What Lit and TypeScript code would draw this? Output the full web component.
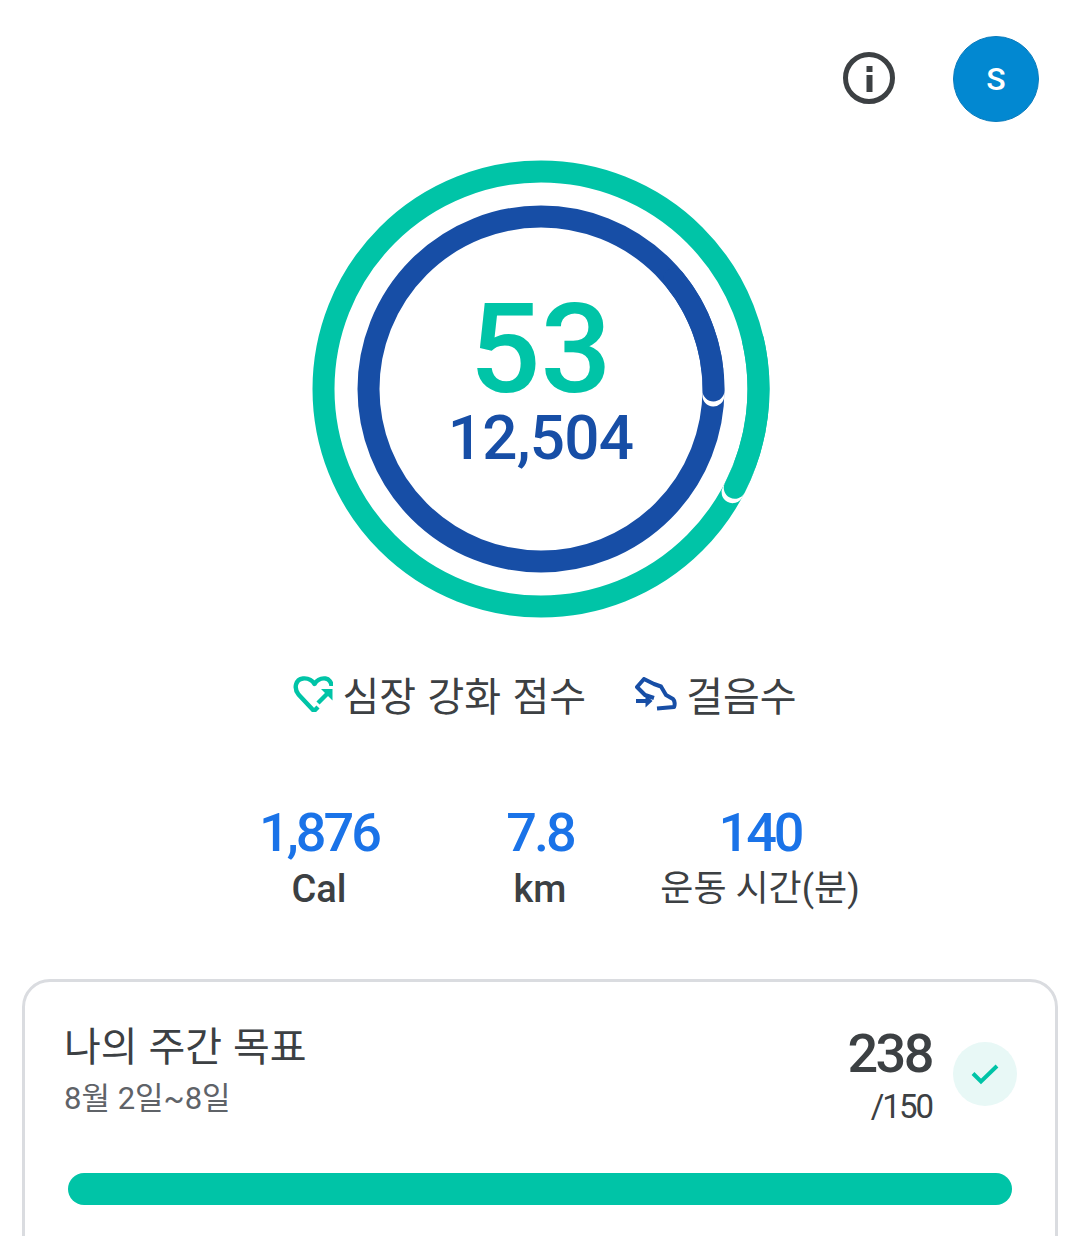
import { LitElement, html, css, svg } from 'lit';
import { customElement, property } from 'lit/decorators.js';

const TEAL = '#00c4a7';
const BLUE = '#174ea6';

// arc along a circle, angles in degrees clockwise from 12 o'clock
function arc(cx: number, cy: number, r: number, from: number, to: number) {
  const pt = (a: number) => {
    const t = ((a - 90) * Math.PI) / 180;
    return `${cx + r * Math.cos(t)} ${cy + r * Math.sin(t)}`;
  };
  const large = to - from > 180 ? 1 : 0;
  return `M ${pt(from)} A ${r} ${r} 0 ${large} 1 ${pt(to)}`;
}

@customElement('progress-rings')
export class ProgressRings extends LitElement {
  static styles = css`
    :host {
      display: block;
      position: relative;
      width: 460px;
      height: 460px;
    }
    svg {
      display: block;
    }
    .center {
      position: absolute;
      inset: 0;
      display: flex;
      flex-direction: column;
      align-items: center;
      font-family: 'Roboto', sans-serif;
      font-weight: 500;
    }
    .points {
      margin-top: 135px;
      font-size: 125px;
      line-height: 112px;
      color: #00c4a7;
    }
    .steps {
      margin-top: 1px;
      font-size: 62px;
      line-height: 62px;
      letter-spacing: -0.8px;
      color: #174ea6;
    }
  `;

  @property({ type: Number }) outerEnd = 117;
  @property({ type: Number }) innerEnd = 90.5;

  ring(r: number, end: number, color: string) {
    const c = 230;
    // white sliver just past the round cap, where the arc laps over itself
    const sliver = (5 / r) * (180 / Math.PI);
    return svg`
      <circle cx=${c} cy=${c} r=${r} fill="none" stroke=${color} stroke-width="22"></circle>
      <path d=${arc(c, c, r, end - 6, end + sliver)} fill="none" stroke="#fff" stroke-width="22" stroke-linecap="round"></path>
      <path d=${arc(c, c, r, end - 40, end)} fill="none" stroke=${color} stroke-width="22" stroke-linecap="round"></path>
    `;
  }

  render() {
    return html`
      <svg width="460" height="460" viewBox="0 0 460 460">
        ${this.ring(217.5, this.outerEnd, TEAL)} ${this.ring(172.5, this.innerEnd, BLUE)}
      </svg>
      <div class="center">
        <div class="points">53</div>
        <div class="steps">12,504</div>
      </div>
    `;
  }
}

@customElement('app-root')
export class AppRoot extends LitElement {
  static styles = css`
    :host {
      display: block;
      width: 1080px;
      height: 1236px;
      overflow: hidden;
      background: #fff;
      color: #3c4043;
      font-family: 'Roboto', 'Noto Sans CJK KR', sans-serif;
    }
    .top {
      display: flex;
      justify-content: flex-end;
      align-items: center;
      gap: 57px;
      padding: 36px 41px 0 0;
    }
    .info {
      display: block;
      margin-bottom: 2px;
    }
    .avatar {
      width: 86px;
      height: 86px;
      box-sizing: border-box;
      border-radius: 50%;
      background: #0288d1;
      border: 1px solid #0b7cbd;
      color: #fff;
      display: flex;
      align-items: center;
      justify-content: center;
      font-size: 32px;
      font-weight: 500;
    }
    .rings {
      display: flex;
      justify-content: center;
      margin-top: 37px;
      padding-left: 1px;
    }
    .legend {
      display: flex;
      justify-content: center;
      margin-top: 45px;
      height: 60px;
      align-items: center;
      font-size: 40px;
      word-spacing: 1.5px;
      padding-left: 9px;
      gap: 49px;
    }
    .legend-item {
      display: flex;
      align-items: center;
      gap: 9px;
      white-space: nowrap;
    }
    .stats {
      display: grid;
      grid-template-columns: 222px 220px 220px;
      padding-left: 208px;
      margin-top: 78px;
      text-align: center;
    }
    .stat-value {
      font-size: 54px;
      line-height: 62px;
      font-weight: 500;
      letter-spacing: -3px;
      color: #1a73e8;
    }
    .stat-label {
      font-size: 36px;
      line-height: 50px;
      white-space: nowrap;
    }
    .stat-label.strong {
      font-size: 38px;
      font-weight: 500;
    }
    .card {
      margin: 65px 22px 0;
      height: 300px;
      box-sizing: border-box;
      border: 3px solid #dadce0;
      border-radius: 28px;
      padding: 38px 43px 0 39px;
    }
    .card-head {
      display: flex;
      align-items: flex-start;
    }
    .titles {
      flex: 1;
    }
    .title {
      font-size: 40px;
      word-spacing: 1px;
      line-height: 56px;
    }
    .date {
      font-size: 31px;
      line-height: 46px;
      color: #5f6368;
    }
    .score {
      text-align: right;
      margin: 3px 21px 0 0;
    }
    .score-value {
      font-size: 54px;
      line-height: 62px;
      font-weight: 500;
      letter-spacing: -2.5px;
    }
    .score-goal {
      font-size: 33px;
      line-height: 44px;
      letter-spacing: -2px;
    }
    .check {
      width: 64px;
      height: 64px;
      border-radius: 50%;
      background: #e8f8f6;
      display: flex;
      align-items: center;
      justify-content: center;
      margin: 22px -5px 0 0;
    }
    .bar {
      height: 32px;
      border-radius: 16px;
      background: #00c4a7;
      margin: 44px 0 0 4px;
    }
  `;

  render() {
    return html`
      <div class="top">
        <svg class="info" width="54" height="54" viewBox="0 0 54 54">
          <circle cx="27" cy="27" r="23.5" fill="none" stroke="#3c4043" stroke-width="5"></circle>
          <rect x="24.5" y="15" width="6" height="6" fill="#3c4043"></rect>
          <rect x="24.5" y="24" width="6" height="17" fill="#3c4043"></rect>
        </svg>
        <div class="avatar">S</div>
      </div>

      <div class="rings"><progress-rings></progress-rings></div>

      <div class="legend">
        <div class="legend-item">
          <svg width="41" height="36" viewBox="0 0 41 36" fill="none">
            <path d="M26 31 L22 35 L6.5 18.5 C1.5 12 3.5 3.5 11 2.5 C16 2 20 4 22.5 8 C25 4 29 2 33.5 2.5 C37 3 39.5 6.5 39.5 10"
              stroke="#00c4a7" stroke-width="4.4" stroke-linejoin="round"></path>
            <path d="M36 17 L26 27" stroke="#00c4a7" stroke-width="4.4"></path>
            <path d="M29 13 H40.5 V24.5 Z" fill="#00c4a7"></path>
          </svg>
          심장 강화 점수
        </div>
        <div class="legend-item">
          <svg width="42" height="34" viewBox="0 0 42 34" fill="none">
            <path d="M19 21 L10 18 L2 10 L9 2 L19 7 L26 9.5 L31 18 L38 22 C40 24 40 28 39 30 L22 31.5"
              stroke="#174ea6" stroke-width="4" stroke-linejoin="round"></path>
            <path d="M1 24 H13" stroke="#174ea6" stroke-width="4"></path>
            <path d="M10.5 17.5 L17.5 24 L10.5 30.5 Z" fill="#174ea6"></path>
          </svg>
          걸음수
        </div>
      </div>

      <div class="stats">
        <div>
          <div class="stat-value">1,876</div>
          <div class="stat-label strong">Cal</div>
        </div>
        <div>
          <div class="stat-value">7.8</div>
          <div class="stat-label strong">km</div>
        </div>
        <div>
          <div class="stat-value">140</div>
          <div class="stat-label">운동 시간(분)</div>
        </div>
      </div>

      <div class="card">
        <div class="card-head">
          <div class="titles">
            <div class="title">나의 주간 목표</div>
            <div class="date">8월 2일~8일</div>
          </div>
          <div class="score">
            <div class="score-value">238</div>
            <div class="score-goal">/150</div>
          </div>
          <div class="check">
            <svg width="30" height="22" viewBox="0 0 30 22" fill="none">
              <path d="M3 10.5 L11 18.5 L27 3" stroke="#00c4a7" stroke-width="4"></path>
            </svg>
          </div>
        </div>
        <div class="bar"></div>
      </div>
    `;
  }
}
